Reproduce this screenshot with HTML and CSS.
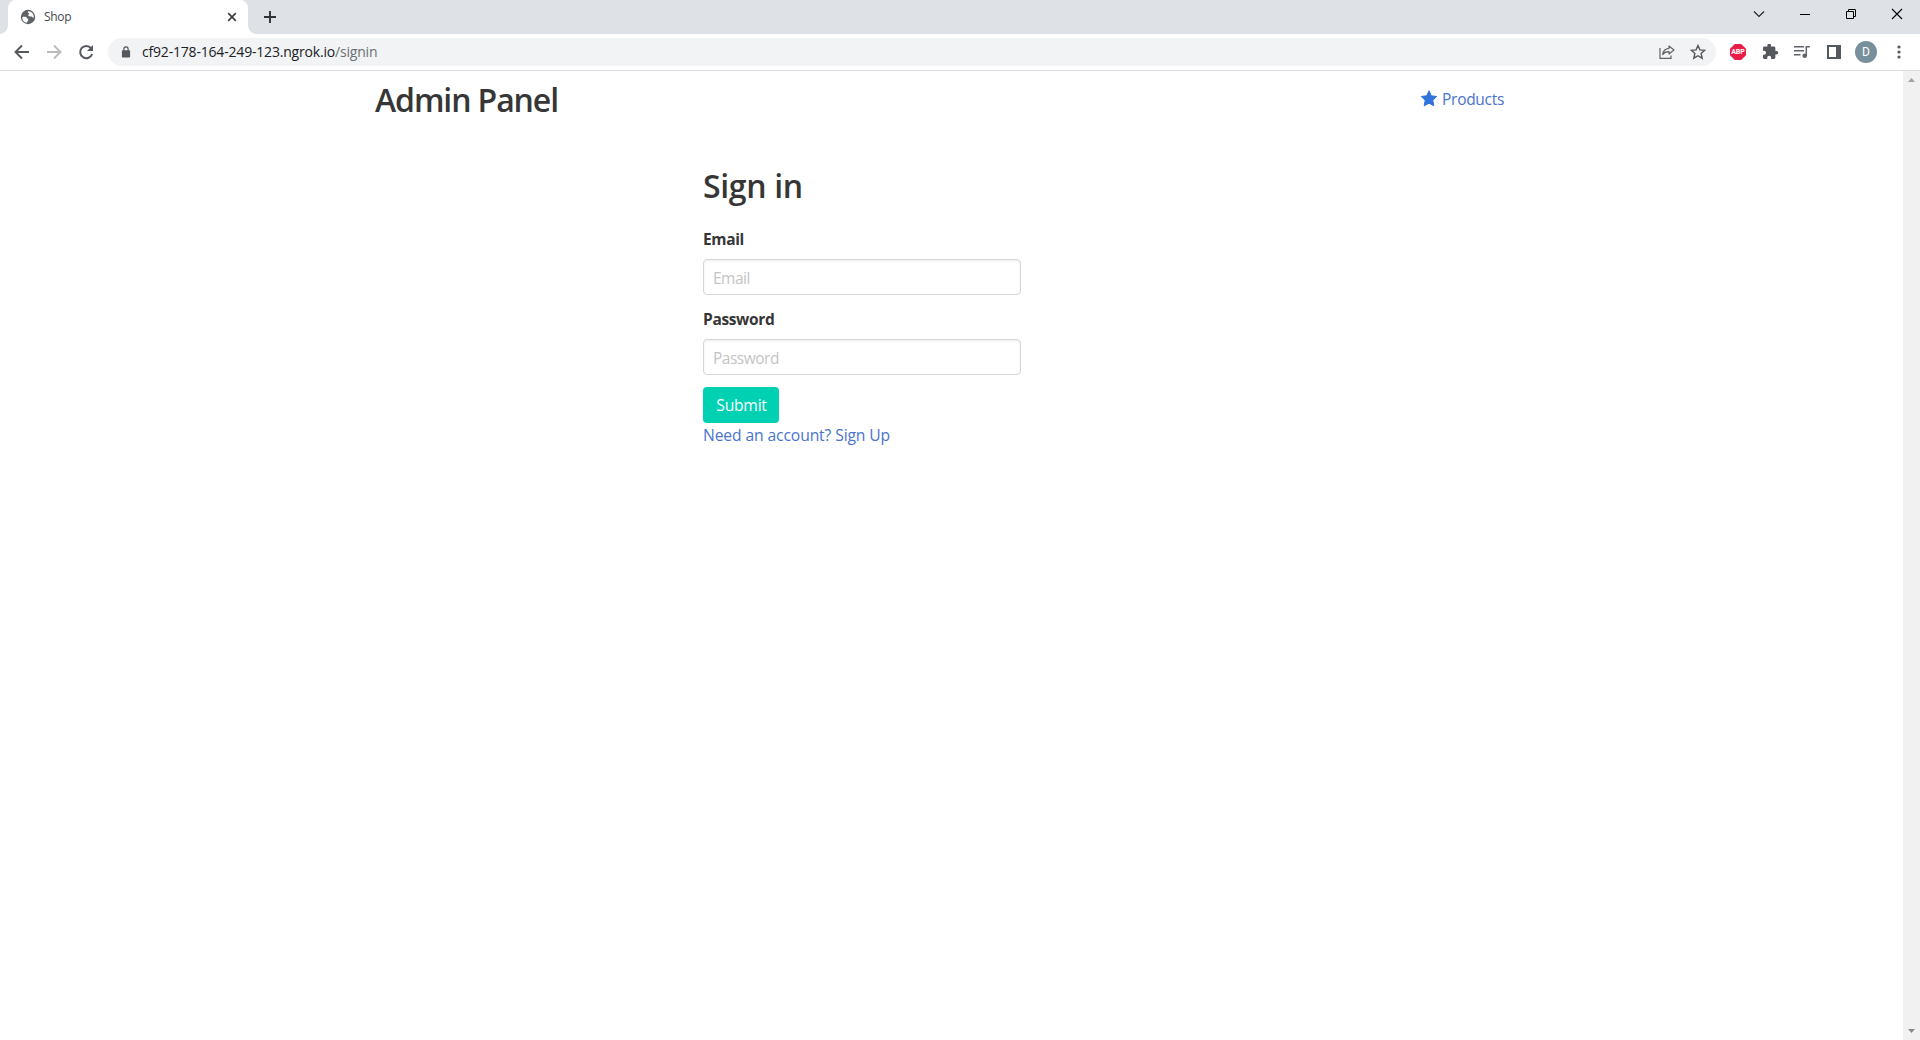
FILE: index.html
```html
<!DOCTYPE html>
<html lang="en">
<head>
<meta charset="utf-8">
<title>Shop</title>
<link rel="stylesheet" href="styles.css">
</head>
<body>
<header class="tabs">
  <div class="tab">
    <svg class="globe" width="16" height="16" viewBox="0 0 16 16"><circle cx="8" cy="8" r="7.2" fill="#5f6368"/><path d="M2.300 8.200C4 7.600 6.300 7.600 7 9c.4 1 1.500.8 1.300 2-.2 1-1.200 1.200-1.300 2.700C4 13.500 2 11 2.300 8.200zM8.300 2.300c2.200 0 4.200 1.300 5 3.300.4 1.200.5 2.400.2 3.500-.8-.3-1-1.400-2.200-1.500-1.400-.1-2.700-.2-3-1.400-.2-.9.9-1.100.8-1.800-.1-.6-1.200-.5-1.300-1.200 0-.4.200-.7.500-.9z" fill="#fff"/></svg>
    <span class="tab-title">Shop</span>
    <svg class="tab-close" width="10" height="10" viewBox="0 0 10 10"><path d="M1.200 1.200l7.600 7.600M8.800 1.200L1.200 8.800" stroke="#3c4043" stroke-width="1.700"/></svg>
  </div>
  <svg class="new-tab" width="12" height="12" viewBox="0 0 12 12"><path d="M6 0v12M0 6h12" stroke="#303236" stroke-width="1.900"/></svg>
  <div class="window-buttons">
    <svg width="12" height="12" viewBox="0 0 12 12"><path d="M1 3.500l5 5 5-5" fill="none" stroke="#202124" stroke-width="1.100"/></svg>
    <svg width="12" height="12" viewBox="0 0 12 12"><path d="M1 6.500h10" stroke="#000"/></svg>
    <svg width="12" height="12" viewBox="0 0 12 12"><path d="M1.500 3.500h7v7h-7zM3.500 3V1.500h7v7H9" fill="none" stroke="#000"/></svg>
    <svg width="12" height="12" viewBox="0 0 12 12"><path d="M1 1l10 10M11 1L1 11" stroke="#000" stroke-width="1.100"/></svg>
  </div>
</header>
<nav class="toolbar">
  <div class="nav-buttons">
    <svg width="16" height="16" viewBox="0 0 16 16"><path d="M15 8H2M8 1.500L1.500 8 8 14.500" fill="none" stroke="#55585d" stroke-width="1.900"/></svg>
    <svg width="16" height="16" viewBox="0 0 16 16"><path d="M1 8h13M8 1.500L14.500 8 8 14.500" fill="none" stroke="#babcbe" stroke-width="1.900"/></svg>
    <svg width="16" height="16" viewBox="0 0 16 16"><path d="M13 4.200A6.100 6.100 0 1 0 14.100 10" fill="none" stroke="#55585d" stroke-width="2"/><path d="M15 1v6H9z" fill="#55585d"/></svg>
  </div>
  <div class="address">
    <svg class="lock" width="10" height="12" viewBox="0 0 10 12"><path d="M1.700 4.200h6.600q.8 0 .8.800v5.800q0 .8-.8.800H1.700q-.8 0-.8-.8V5q0-.8.8-.8z" fill="#55585d"/><path d="M2.900 5V3a2.100 2.100 0 0 1 4.200 0v2" fill="none" stroke="#55585d" stroke-width="1.200"/></svg>
    <span class="url">cf92-178-164-249-123.ngrok.io<span class="path">/signin</span></span>
    <svg class="share" width="16" height="14" viewBox="0 0 16 14"><path d="M1 3v10.300h11V10.500" fill="none" stroke="#5f6368" stroke-width="1.200"/><path d="M10 1l5 4-5 4V6.700C7 6.600 5 7.500 3.700 9.600 4 6 6 3.700 10 3.300z" fill="none" stroke="#5f6368" stroke-width="1.200" stroke-linejoin="round"/></svg>
    <svg class="bookmark" width="16" height="16" viewBox="0 0 16 16"><path d="M8 1.500l1.900 4.400 4.800.4-3.600 3.200 1.100 4.700L8 11.700l-4.200 2.500 1.100-4.700L1.300 6.300l4.800-.4z" fill="none" stroke="#55585d" stroke-width="1.400"/></svg>
  </div>
  <div class="extensions">
    <div class="abp">ABP</div>
    <svg class="puzzle" width="16" height="16" viewBox="2 1.500 22 22"><path d="M20.500 11H19V7c0-1.100-.9-2-2-2h-4V3.500a2.500 2.500 0 0 0-5 0V5H4c-1.100 0-2 .9-2 2v3.800h1.500a2.700 2.700 0 0 1 0 5.400H2V20c0 1.100.9 2 2 2h3.800v-1.500a2.700 2.700 0 0 1 5.400 0V22H17c1.100 0 2-.9 2-2v-4h1.500a2.500 2.500 0 0 0 0-5z" fill="#55585d"/></svg>
    <svg class="playlist" width="16" height="14" viewBox="0 0 16 14"><path d="M0 1.700h10M0 5.700h10M0 9.700h6.500M12.300 11V1.700h3.500" fill="none" stroke="#5f6368" stroke-width="1.500"/><circle cx="10.700" cy="10.800" r="2.300" fill="#5f6368"/></svg>
    <svg class="panel" width="14" height="14" viewBox="0 0 14 14"><path d="M0 0h14v14H0zM2 2v10h7V2z" fill="#55585d" fill-rule="evenodd"/></svg>
    <div class="avatar">D</div>
    <svg width="4" height="14" viewBox="0 0 4 14"><g fill="#55585d"><circle cx="2" cy="2" r="1.600"/><circle cx="2" cy="7" r="1.600"/><circle cx="2" cy="12" r="1.600"/></g></svg>
  </div>
</nav>
<div class="viewport">
  <main class="page">
    <div class="container">
      <div class="topbar">
        <h1 class="title brand">Admin Panel</h1>
        <a class="products"><svg width="18" height="17" viewBox="0 0 18 17"><path d="M9 .8l2.300 5 5.400.7-3.900 3.800 1 5.500L9 13.200l-4.800 2.600 1-5.500L1.300 6.500l5.400-.7z" fill="#3273dc" stroke="#3273dc" stroke-linejoin="round"/></svg><span>Products</span></a>
      </div>
      <form class="signin">
        <h2 class="title heading">Sign in</h2>
        <label class="label label-email" for="email">Email</label>
        <input class="input" id="email" placeholder="Email">
        <label class="label label-password" for="password">Password</label>
        <input class="input" id="password" type="password" placeholder="Password">
        <button class="submit" type="button">Submit</button>
        <a class="signup">Need an account? Sign Up</a>
      </form>
    </div>
  </main>
  <div class="scrollbar">
    <svg width="7" height="4" viewBox="0 0 7 4"><path d="M3.500 0L7 4H0z" fill="#a3a3a3"/></svg>
    <svg width="7" height="4" viewBox="0 0 7 4"><path d="M0 0h7L3.500 4z" fill="#8a8a8a"/></svg>
  </div>
</div>
</body>
</html>
```
FILE: styles.css
```css
* { box-sizing: border-box; }
body {
  margin: 0;
  height: 1040px;
  display: flex;
  flex-direction: column;
  overflow: hidden;
  background: #fff;
  font-family: "Open Sans", "Noto Sans", sans-serif;
  color: #363636;
}
svg { display: block; flex: none; }
.tabs {
  height: 34px;
  flex: none;
  background: #dee1e6;
  display: flex;
  padding-left: 8px;
}
.tab {
  width: 240px;
  background: #fff;
  border-radius: 8px 8px 0 0;
  display: flex;
  align-items: center;
  padding: 0 11px 0 12px;
  position: relative;
}
.tab::before, .tab::after {
  content: "";
  position: absolute;
  bottom: 0;
  width: 8px;
  height: 8px;
}
.tab::before { left: -8px; background: radial-gradient(circle at 0 0, transparent 7.5px, #fff 8px); }
.tab::after { right: -8px; background: radial-gradient(circle at 100% 0, transparent 7.5px, #fff 8px); }
.tab-title { font-size: 12px; letter-spacing: -.3px; line-height: 16px; margin-left: 8px; color: #45484c; }
.tab-close { margin-left: auto; }
.new-tab { margin: 11px 0 0 16px; }
.window-buttons { margin: 8px 17px 0 auto; display: flex; gap: 34px; }
.toolbar {
  height: 37px;
  flex: none;
  border-bottom: 1px solid #dadce0;
  display: flex;
  align-items: center;
  padding: 0 19px 0 14px;
}
.nav-buttons { display: flex; gap: 16px; }
.address {
  flex: 1;
  height: 28px;
  margin: 0 14px;
  border-radius: 14px;
  background: #f1f3f4;
  display: flex;
  align-items: center;
  padding: 0 10px 0 13px;
}
.url { margin-left: 11px; font-size: 14px; letter-spacing: -.19px; line-height: 20px; color: #202124; }
.path { color: #6b6f74; }
.share { margin-left: auto; }
.bookmark { margin-left: 15px; }
.extensions { display: flex; align-items: center; }
.abp {
  width: 16px;
  height: 16px;
  margin-right: 17px;
  background: #e91e48;
  clip-path: polygon(30% 0, 70% 0, 100% 30%, 100% 70%, 70% 100%, 30% 100%, 0 70%, 0 30%);
  color: #fff;
  font: bold 7px/16px Roboto, "Liberation Sans", sans-serif;
  text-align: center;
}
.puzzle { margin-right: 15px; }
.playlist { margin-right: 17px; }
.panel { margin-right: 14px; }
.avatar {
  width: 22px;
  height: 22px;
  margin-right: 20px;
  border-radius: 50%;
  background: #78909c;
  color: #fff;
  font: 12px/22px Roboto, sans-serif;
  text-align: center;
}
.viewport { flex: 1; display: flex; min-height: 0; }
.page { flex: 1; padding-right: 1px; }
.scrollbar {
  width: 17px;
  background: #f1f1f1;
  display: flex;
  flex-direction: column;
  align-items: center;
  justify-content: space-between;
  padding: 7px 0;
}
.container { width: 1152px; margin: 0 auto; }
.topbar { display: flex; justify-content: space-between; height: 80px; padding-right: 23px; }
.title { margin: 0; font-weight: 600; font-size: 32px; line-height: 36px; white-space: nowrap; }
.brand { margin-top: 11px; letter-spacing: -1.1px; }
.products { display: flex; height: 24px; margin-top: 16px; gap: 4px; color: #4a74cc; font-size: 15.500px; letter-spacing: -.3px; line-height: 24px; }
.products svg { margin-top: 3px; }
.signin { width: 318px; margin: 0 0 0 328px; display: flex; flex-direction: column; align-items: flex-start; }
.heading { margin-top: 17px; letter-spacing: -.35px; }
.label { font-weight: 700; font-size: 15.500px; letter-spacing: -.35px; line-height: 24px; }
.label-email { margin-top: 23px; margin-bottom: 8px; }
.label-password { margin-top: 12px; margin-bottom: 8px; }
.input {
  width: 100%;
  height: 36px;
  border: 1px solid #d6d6d6;
  border-radius: 4px;
  box-shadow: inset 0 1px 2px rgba(10, 10, 10, .08);
  padding: 1px 10px 0 9px;
  font: 15.500px "Open Sans", "Noto Sans", sans-serif;
  letter-spacing: -.5px;
}
.input::placeholder { color: #c4c4c4; }
.submit {
  width: 76px;
  height: 36px;
  margin-top: 12px;
  padding: 0 0 0 1px;
  border: 0;
  border-radius: 4px;
  background: #00d1b2;
  color: #fff;
  font: 15.700px "Open Sans", "Noto Sans", sans-serif;
  letter-spacing: -.25px;
}
.signup { font-size: 15.700px; letter-spacing: -.13px; line-height: 24px; color: #4a74cc; white-space: nowrap; }
```
